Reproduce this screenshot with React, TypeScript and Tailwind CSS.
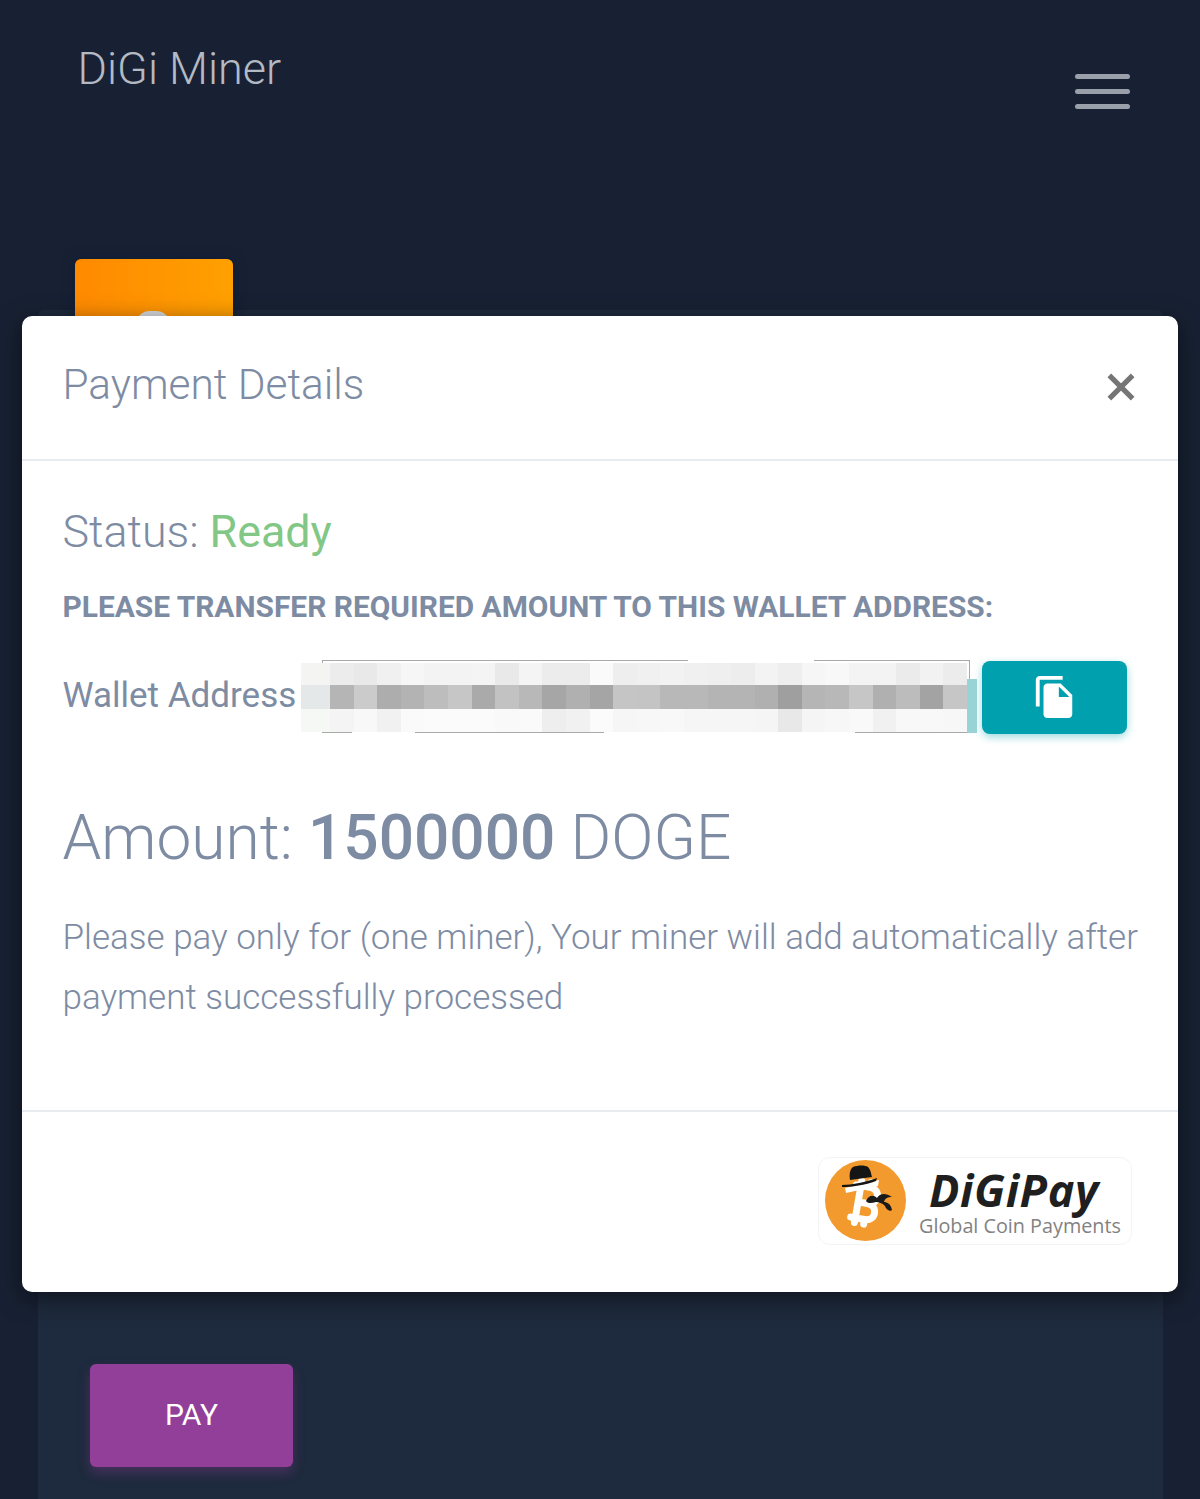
import React from 'react';
import { MdFileCopy } from 'react-icons/md';

const topRow = ['#f4f4f2', '#ececec', '#e9e9e9', '#f0f0f0', '#f6f6f6', '#f3f3f3', '#f3f3f3', '#f4f4f4', '#e9e9e9', '#f4f4f4', '#ececec', '#ececec', '#fafafa', '#eeeeee', '#f0f0f0', '#f2f2f2', '#f0f0f0', '#efefef', '#ededed', '#f3f3f3', '#eeeeee', '#f6f6f6', '#f8f8f8', '#f3f3f3', '#f3f3f3', '#ebebeb', '#f2f2f2', '#ececec'];
const midRow = ['#e4e8e8', '#b5b5b5', '#cbcbcb', '#adadad', '#b3b3b3', '#bdbdbd', '#c6c6c6', '#aaaaaa', '#c2c2c2', '#b8b8b8', '#a6a6a6', '#b0b0b0', '#a5a5a5', '#c5c5c5', '#c4c4c4', '#b8b8b8', '#b8b8b8', '#b4b4b4', '#b4b4b4', '#b0b0b0', '#9f9f9f', '#b5b5b5', '#b8b8b8', '#c6c6c6', '#b0b0b0', '#bcbcbc', '#a3a3a3', '#c6c6c6'];
const bottomRow = ['#f6f8f6', '#f4f4f4', '#f8f8f8', '#f1f1f1', '#fafafa', '#fbfbfb', '#fbfbfb', '#fbfbfb', '#f9f9f9', '#fafafa', '#eeeeee', '#f1f1f1', '#fbfbfb', '#f6f6f6', '#f7f7f7', '#f8f8f8', '#f6f6f6', '#f6f6f6', '#f6f6f6', '#f5f5f5', '#e8e8e8', '#f5f5f5', '#f7f7f7', '#f9f9f9', '#f1f1f1', '#f8f8f8', '#f8f8f8', '#f7f7f7'];

const PixelRow = ({ colors, height }: { colors: string[]; height: string }) => (
  <div className={`flex ${height}`}>
    {colors.map((c, i) => (
      <div key={i} className={i === 0 ? 'w-[29px] shrink-0' : 'w-[23.6px] shrink-0'} style={{ backgroundColor: c }} />
    ))}
  </div>
);

const DigiPayLogo = () => (
  <div className="flex h-[88px] w-[314px] items-center rounded-xl border border-[#f3f4f5] pl-[6px]">
    <div className="relative -mt-[2px] h-[81px] w-[81px] shrink-0 rounded-full bg-[#f29a2e]">
      <svg viewBox="0 0 24 24" className="absolute left-[12px] top-[15px] h-[56px] w-[56px]" fill="none" stroke="#fff" strokeWidth="3" strokeLinecap="round" strokeLinejoin="round">
        <path d="M11.767 19.089c4.924.868 6.14-6.025 1.216-6.894m-1.216 6.894L5.86 18.047m5.908 1.042-.347 1.97m1.563-8.864c4.924.869 6.14-6.025 1.215-6.893m-1.215 6.893-3.94-.694m5.155-6.2L8.29 4.26m5.908 1.042.348-1.97M7.48 20.364l3.126-17.727" />
      </svg>
      {/* hat + moustache */}
      <svg viewBox="0 0 81 81" className="absolute inset-0 h-full w-full">
        <path d="M20 28l34-8-1 6-32 7z" fill="#fff" />
        <path d="M25 20c-1-6 0-11 3-13 5-2 12-2 15 0 3 3 3 7 4 10z" fill="#151515" />
        <path d="M17 25c10 0 24-3 35-7l-1 3c-11 4-24 6-34 6z" fill="#151515" />
        <path d="M41 41c2-5 7-7 11-3 3-5 9-5 15-1-4 0-7 1-8 5 3 0 7 2 8 8-1 2-6 0-7-4-3-3-6-4-9-4-4 1-8 2-10-1z" fill="#1a1a1a" />
      </svg>
    </div>
    <div className="ml-[13px] mt-[3px] flex flex-col">
      <span className="pl-[10px] font-['Open_Sans',sans-serif] text-[45px] font-bold italic leading-[44px] tracking-[0.6px] text-[#1f1f1f]">DiGiPay</span>
      <span className="mt-[2px] font-['Open_Sans',sans-serif] text-[19.8px] leading-[24px] text-[#828282]">Global Coin Payments</span>
    </div>
  </div>
);

const PaymentModal = () => (
  <div className="absolute left-[22px] top-[316px] flex h-[976px] w-[1156px] flex-col rounded-[10px] bg-white shadow-[0_6px_24px_rgba(0,0,0,0.55)]">
    <div className="flex h-[145px] shrink-0 items-start justify-between border-b-2 border-[#e9ecef] pl-[40.5px] pr-[43px]">
      <h3 className="mt-[39px] text-[42.4px] font-light leading-[60px] text-[#7d8ba3]">Payment Details</h3>
      <svg viewBox="0 0 24 24" className="mt-[57px] h-[28px] w-[28px]" fill="none" stroke="#757575" strokeWidth="4.4">
        <path d="M2 2l20 20M22 2L2 22" />
      </svg>
    </div>

    <div className="flex-1 pl-[40.5px] pr-[40px]">
      <p className="mt-[41px] text-[44.8px] font-light leading-[60px] text-[#7d8ba3]">
        Status: <span className="font-normal text-[#82c785]">Ready</span>
      </p>
      <p className="mt-[27px] whitespace-nowrap text-[29.9px] font-bold leading-[36px] text-[#7d8ba3]">PLEASE TRANSFER REQUIRED AMOUNT TO THIS WALLET ADDRESS:</p>

      <div className="mt-[34px] flex h-[76px] items-center">
        <span className="-mt-[2px] w-[238.5px] shrink-0 whitespace-nowrap text-[35px] leading-[44px] text-[#7d8ba3]">Wallet Address</span>
        <div className="relative -mt-[2px] h-[73px] w-[669px] shrink-0">
          <div className="absolute bottom-0 left-[21px] top-0 w-[648px] border border-[#a9a9a9]" />
          {/* blurred-out address */}
          <div className="absolute left-[387px] top-0 h-[3px] w-[126px] bg-white" />
          <div className="absolute bottom-0 left-[51px] h-[2px] w-[63px] bg-white" />
          <div className="absolute bottom-0 left-[303px] h-[2px] w-[251px] bg-white" />
          <div className="absolute left-0 top-[3px]">
            <PixelRow colors={topRow} height="h-[22px]" />
            <PixelRow colors={midRow} height="h-[24px]" />
            <PixelRow colors={bottomRow} height="h-[23px]" />
          </div>
          <div className="absolute left-[666px] top-[19px] h-[54px] w-[10px] bg-[#98d3d6]" />
        </div>
        <button className="ml-[12px] flex h-[73px] w-[145px] shrink-0 items-center justify-center rounded-[8px] bg-[#00a0ae] text-white shadow-[0_3px_8px_rgba(0,160,174,0.4)]">
          <MdFileCopy size={46} />
        </button>
      </div>

      <p className="mt-[63px] whitespace-nowrap text-[62.2px] font-light leading-[80px] text-[#7d8ba3]">
        Amount: <span className="font-medium">1500000</span> DOGE
      </p>
      <p className="mt-[30px] whitespace-nowrap text-[35px] font-light leading-[60px] text-[#7d8ba3]">
        Please pay only for (one miner), Your miner will add automatically after
        <br />
        payment successfully processed
      </p>
    </div>

    <div className="flex h-[182px] shrink-0 items-center justify-end border-t-2 border-[#e9ecef] pb-[2px] pr-[46px]">
      <DigiPayLogo />
    </div>
  </div>
);

export default function App() {
  return (
    <div className="relative h-[1499px] overflow-hidden bg-[#182133] font-['Roboto',sans-serif]">
      <header className="flex h-[310px] items-start justify-between pl-[77.5px] pr-[70px]">
        <span className="mt-[39px] text-[45px] font-light leading-[60px] text-[#b4bac4]">DiGi Miner</span>
        <div className="mt-[74px] flex w-[55px] flex-col gap-[10px]">
          <div className="h-[5px] rounded-full bg-[#9aa0a9]" />
          <div className="h-[5px] rounded-full bg-[#9aa0a9]" />
          <div className="h-[5px] rounded-full bg-[#9aa0a9]" />
        </div>
      </header>

      <div className="relative ml-[38px] mr-[37px] h-[1189px] rounded-t-[6px] bg-[#1e2a3d] pl-[52px] pt-[1054px]">
        <div className="absolute left-[37px] top-[-51px] h-[108px] w-[158px] rounded-[6px] bg-gradient-to-r from-[#ff8a00] to-[#ffa000] shadow-[0_0_12px_rgba(10,25,60,0.8)]">
          <div className="absolute left-[60px] top-[52px] h-[30px] w-[36px] rounded-full bg-[#d8dadc]" />
        </div>
        <button className="h-[103px] w-[203px] rounded-[6px] bg-[#923f9a] pb-[2px] text-[30px] text-white shadow-[0_6px_12px_rgba(146,63,154,0.35)]">PAY</button>
      </div>

      <PaymentModal />
    </div>
  );
}
